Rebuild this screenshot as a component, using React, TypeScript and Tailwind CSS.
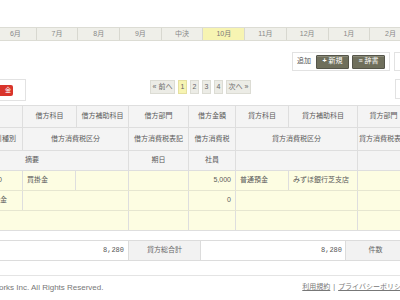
const months = ["6月", "7月", "8月", "9月", "中決", "10月", "11月", "12月", "1月", "2月", "3月"];

const font = "font-['Liberation_Sans','Noto_Sans_CJK_JP',sans-serif]";

function Cell({ w, children, className = "" }: { w: string; children?: React.ReactNode; className?: string }) {
  return (
    <div className={`${w} shrink-0 h-full border-r border-[#dedede] flex items-center overflow-hidden whitespace-nowrap ${className}`}>
      {children}
    </div>
  );
}

export default function App() {
  return (
    <div className={`w-[400px] h-[300px] overflow-hidden bg-white text-[7px] text-[#666] ${font}`}>
      {/* month tabs */}
      <div className="h-[27px]" />
      <div className="flex h-[14px] ml-[-5px] border-y border-[#dcdcd4] bg-[#efefe9]">
        {months.map((m) => (
          <div
            key={m}
            className={`w-[41.7px] shrink-0 border-r border-[#d8d8d0] flex items-center justify-center ${
              m === "10月" ? "bg-[#f7f4b2] text-[#777]" : "text-[#888]"
            }`}
          >
            {m}
          </div>
        ))}
      </div>

      {/* add buttons */}
      <div className="flex mt-[11px] h-[19px] ml-[292px] gap-[4px]">
        <div className="w-[98px] shrink-0 border border-[#e2e2e2] flex items-center pl-[4px] gap-[3px]">
          <span className="text-[#555] mr-[2px]">追加</span>
          <div className="w-[33px] h-[14px] bg-[#6f6f5c] border border-[#55554a] rounded-[1px] text-white flex items-center justify-center gap-[2px] shadow-[inset_0_1px_0_#8a8a78]">
            <span className="font-bold">+</span>新規
          </div>
          <div className="w-[33px] h-[14px] bg-[#6f6f5c] border border-[#55554a] rounded-[1px] text-white flex items-center justify-center gap-[2px] shadow-[inset_0_1px_0_#8a8a78]">
            <span>≡</span>辞書
          </div>
        </div>
        <div className="w-[20px] shrink-0 border border-[#e2e2e2]" />
      </div>

      {/* second toolbar */}
      <div className="flex mt-[8px] h-[22px]">
        <div className="w-[26px] shrink-0 h-full border border-l-0 border-[#e2e2e2] flex items-center">
          <div className="w-[13px] h-[11px] bg-[#d9342b] rounded-r-[2px] text-white flex items-center justify-end pr-[2px] text-[6px]">金</div>
        </div>
        <div className="ml-[124px] mt-[1px] flex gap-[3px] h-[14px]">
          <div className="w-[25px] bg-[#ecece6] border border-[#dcdcd4] flex items-center justify-center text-[#666]">« 前へ</div>
          <div className="w-[9px] bg-[#f7f4b2] border border-[#e5e0a0] flex items-center justify-center">1</div>
          <div className="w-[9px] bg-[#ecece6] border border-[#dcdcd4] flex items-center justify-center">2</div>
          <div className="w-[9px] bg-[#ecece6] border border-[#dcdcd4] flex items-center justify-center">3</div>
          <div className="w-[9px] bg-[#ecece6] border border-[#dcdcd4] flex items-center justify-center">4</div>
          <div className="w-[25px] bg-[#ecece6] border border-[#dcdcd4] flex items-center justify-center">次へ »</div>
        </div>
        <div className="ml-[144px] w-[20px] shrink-0 h-[20px] border border-[#e2e2e2]" />
      </div>

      {/* table */}
      <div className="mt-[4px] border-t border-[#dedede] text-[#5a5a5a]">
        <div className="flex h-[22px] bg-[#f4f4f4] border-b border-[#dedede]">
          <Cell w="w-[23px]" />
          <Cell w="w-[54px]" className="justify-center">借方科目</Cell>
          <Cell w="w-[52px]" className="justify-center">借方補助科目</Cell>
          <Cell w="w-[60px]" className="justify-center">借方部門</Cell>
          <Cell w="w-[47px]" className="justify-center">借方金額</Cell>
          <Cell w="w-[53px]" className="justify-center">貸方科目</Cell>
          <Cell w="w-[69px]" className="justify-center">貸方補助科目</Cell>
          <Cell w="w-[52px]" className="justify-center">貸方部門</Cell>
        </div>
        <div className="flex h-[23px] bg-[#f4f4f4] border-b border-[#dedede]">
          <Cell w="w-[23px]" className="justify-end pr-[6px]">取引種別</Cell>
          <Cell w="w-[106px]" className="justify-center">借方消費税区分</Cell>
          <Cell w="w-[60px]" className="justify-center">借方消費税表記</Cell>
          <Cell w="w-[47px]" className="justify-center">借方消費税</Cell>
          <Cell w="w-[122px]" className="justify-center">貸方消費税区分</Cell>
          <Cell w="w-[52px]" className="justify-center">貸方消費税表記</Cell>
        </div>
        <div className="flex h-[20px] bg-[#f4f4f4] border-b border-[#dedede]">
          <Cell w="w-[129px]" className="pl-[25px]">摘要</Cell>
          <Cell w="w-[60px]" className="justify-center">期日</Cell>
          <Cell w="w-[47px]" className="justify-center">社員</Cell>
          <Cell w="w-[122px]" />
          <Cell w="w-[52px]" />
        </div>
        <div className="flex h-[20px] bg-[#fdfde2] border-b border-[#e6e6d0]">
          <Cell w="w-[23px]" className="justify-end pr-[20px]">0</Cell>
          <Cell w="w-[53px]" className="pl-[4px]">買掛金</Cell>
          <Cell w="w-[53px]" />
          <Cell w="w-[60px]" />
          <Cell w="w-[47px]" className="justify-end pr-[4px]">5,000</Cell>
          <Cell w="w-[53px]" className="pl-[4px]">普通預金</Cell>
          <Cell w="w-[69px]" className="pl-[4px]">みずほ銀行芝支店</Cell>
          <Cell w="w-[52px]" />
        </div>
        <div className="flex h-[20px] bg-[#fdfde2] border-b border-[#e6e6d0]">
          <Cell w="w-[23px]" className="justify-end pr-[15px]">現金</Cell>
          <Cell w="w-[106px]" />
          <Cell w="w-[60px]" />
          <Cell w="w-[47px]" className="justify-end pr-[4px]">0</Cell>
          <Cell w="w-[122px]" />
          <Cell w="w-[52px]" />
        </div>
        <div className="flex h-[20px] bg-[#fdfde2] border-b border-[#dedede]">
          <Cell w="w-[129px]" />
          <Cell w="w-[60px]" />
          <Cell w="w-[47px]" />
          <Cell w="w-[122px]" />
          <Cell w="w-[52px]" />
        </div>
      </div>

      {/* totals */}
      <div className="mt-[9px] flex h-[21px] border-y border-[#dcdcdc]">
        <div className="w-[128px] shrink-0 flex items-center justify-end pr-[4px] font-['Liberation_Mono',monospace] text-[#555]">8,280</div>
        <div className="w-[73px] shrink-0 bg-[#f2f2f2] border-x border-[#dcdcdc] flex items-center justify-center">貸方総合計</div>
        <div className="w-[144px] shrink-0 flex items-center justify-end pr-[3px] font-['Liberation_Mono',monospace] text-[#555]">8,280</div>
        <div className="w-[60px] shrink-0 bg-[#f2f2f2] border-l border-[#dcdcdc] flex items-center justify-center">件数</div>
      </div>

      {/* footer */}
      <div className="mt-[14px] border-t border-[#e4e4e4] flex items-start justify-between pt-[6px] text-[#777]">
        <span className="ml-[-57px] whitespace-nowrap text-[8px]">© 2013 freee Works Inc. All Rights Reserved.</span>
        <span className="whitespace-nowrap mr-[-8px]">
          <span className="underline">利用規約</span>
          <span className="mx-[3px]">|</span>
          <span className="underline">プライバシーポリシー</span>
        </span>
      </div>
    </div>
  );
}
